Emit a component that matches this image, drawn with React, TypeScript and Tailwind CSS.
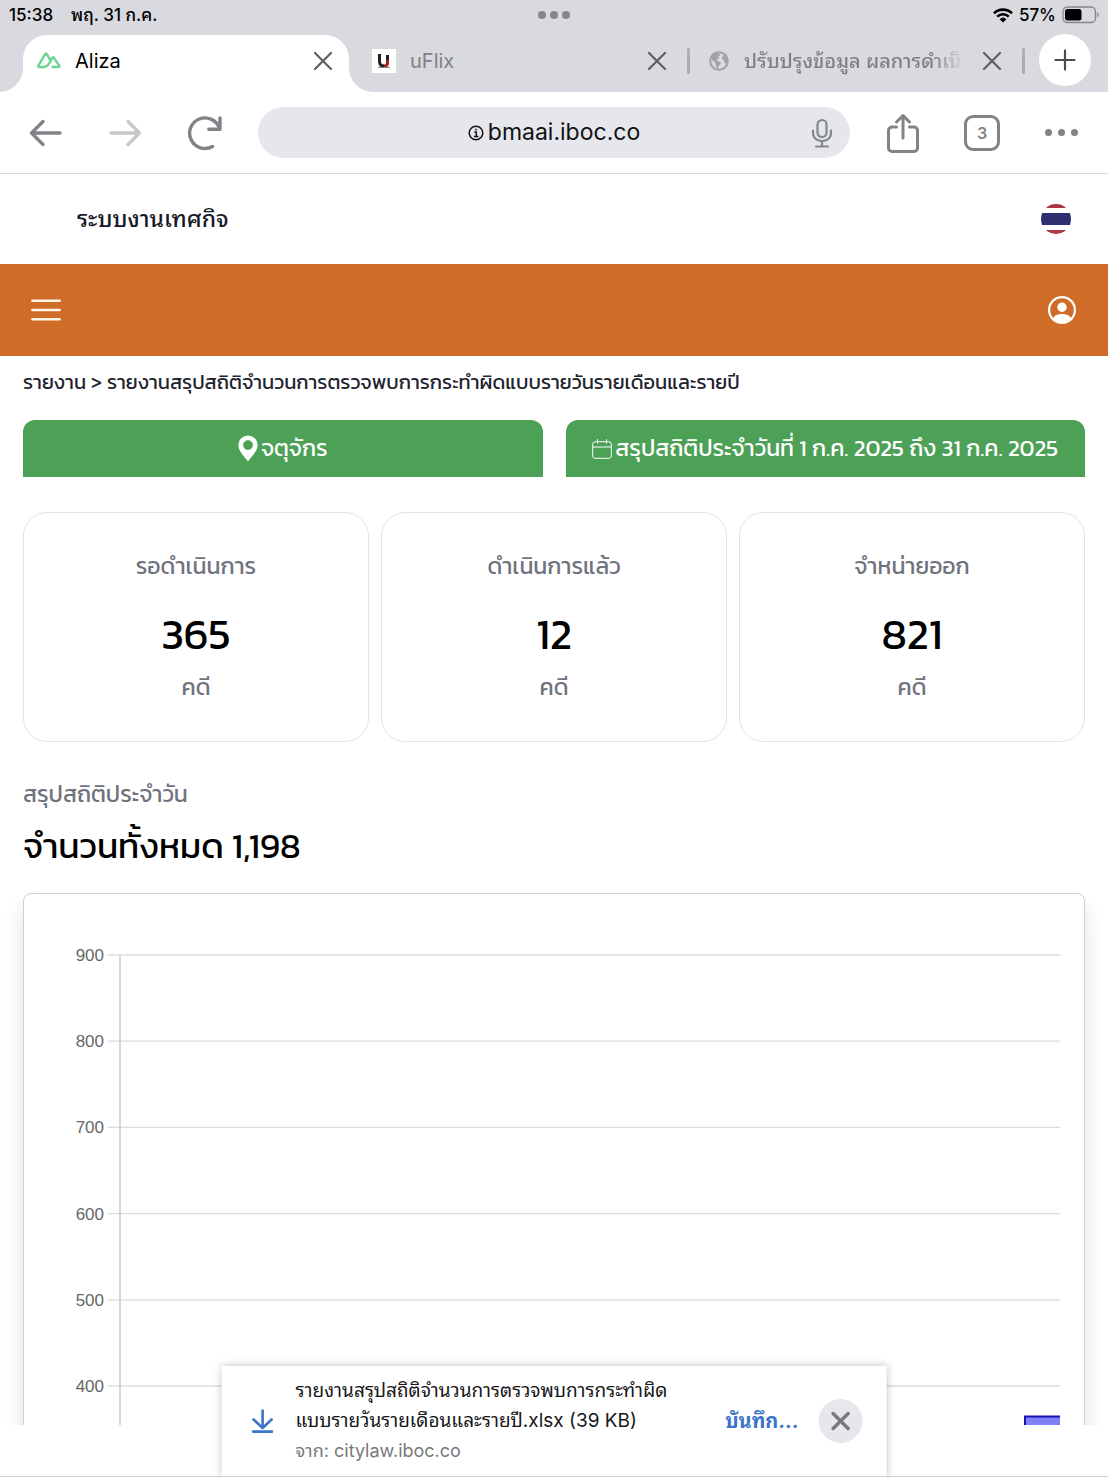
import React from "react";

const UI = "font-[Inter,Thonburi,'Noto_Sans_Thai_Looped',Loma,Garuda,'Noto_Sans',sans-serif]";

function CloseIcon({ className }: { className: string }) {
  return (
    <svg viewBox="0 0 20 20" className={className} fill="none" stroke="currentColor" strokeWidth="2.200" strokeLinecap="round">
      <path d="M2 2 18 18M18 2 2 18" />
    </svg>
  );
}

function StatusBar() {
  return (
    <div className="grid h-7 grid-cols-3 items-center pt-[2px] pr-2 pl-[9px] text-[17px] leading-6 font-medium text-black">
      <div className="flex gap-[18px] whitespace-nowrap">
        <span>15:38</span>
        <span>พฤ. 31 ก.ค.</span>
      </div>
      <div className="flex justify-center gap-1">
        <i className="size-2 rounded-full bg-[#85868a]" />
        <i className="size-2 rounded-full bg-[#85868a]" />
        <i className="size-2 rounded-full bg-[#85868a]" />
      </div>
      <div className="flex items-center justify-end gap-[6px]">
        <svg viewBox="0 0 20 15" className="h-[15px] w-5" aria-label="Wi-Fi">
          <g fill="none" stroke="#000" strokeWidth="2.6">
            <path d="M1 5.2a13 13 0 0 1 18 0" />
            <path d="M4.2 8.6a8.4 8.4 0 0 1 11.6 0" />
          </g>
          <path d="M6.6 11.2a5 5 0 0 1 6.8 0L10 14.6Z" />
        </svg>
        <span>57%</span>
        <svg viewBox="0 0 38 18" className="h-[18px] w-[38px]" aria-label="Battery">
          <rect x="1" y="1" width="32.500" height="15.500" rx="4.500" fill="none" stroke="#85868a" strokeWidth="1.300" />
          <rect x="3" y="3" width="16.500" height="11.500" rx="2.500" />
          <path d="M35.200 6.200c2 .8 2 4.400 0 5.200Z" fill="#85868a" />
        </svg>
      </div>
    </div>
  );
}

function Divider() {
  return <i className="h-[26px] w-[3px] shrink-0 rounded bg-[#adaeb2]" />;
}

function Tabs() {
  return (
    <div className="flex h-16 items-end pr-[17px] pl-[23px] text-xl">
      <div className="grid min-w-0 flex-1 grid-cols-[minmax(0,326fr)_minmax(0,341fr)_minmax(0,335fr)]">
        <div className="relative flex h-[57px] items-center rounded-t-3xl bg-white pr-4 pb-[6px] pl-[14px] text-black">
          <svg viewBox="0 0 24 24" className="absolute -left-[24px] bottom-0 size-6 text-white" aria-hidden="true">
            <path d="M24 0v24H0A24 24 0 0 0 24 0Z" fill="currentColor" />
          </svg>
          <svg viewBox="0 0 24 24" className="absolute -right-[24px] bottom-0 size-6 text-white" aria-hidden="true">
            <path d="M0 0v24h24A24 24 0 0 1 0 0Z" fill="currentColor" />
          </svg>
          <svg viewBox="0 0 24 17" className="h-[17px] w-6 shrink-0" fill="none" stroke="#6fd394" strokeWidth="2.400" strokeLinejoin="round" strokeLinecap="round">
            <path d="M6.800 15H1.800c-.7 0-.9-.6-.6-1.200L8.300 1.900c.4-.7 1-.7 1.400 0l2.600 4.400" />
            <path d="M6.800 15c3.300 0 4.400-1.900 5.500-3.800l3.200-5.500c.4-.7.900-.7 1.300 0l5.500 8.200c.4.7.1 1.100-.5 1.100h-6" />
            <path d="m12.300 6.300 1.300 2.300" />
          </svg>
          <span className="ml-[14px] flex-1 truncate">Aliza</span>
          <button aria-label="Close Aliza" className="text-[#5c5e62]"><CloseIcon className="size-5" /></button>
        </div>
        <div className="flex h-[57px] items-center pb-[6px] pl-[23px] text-[#808185]">
          <span className="flex size-6 shrink-0 items-center justify-center bg-white">
            <svg viewBox="0 0 14 14" className="size-[14px]" aria-hidden="true">
              <path d="M2.500 0v7.500c0 3 1.500 4.500 4.500 4.500" fill="none" stroke="#222" strokeWidth="3" />
              <path d="M10.500 1v8c0 2-1 3-3.500 3" fill="none" stroke="#a3221d" strokeWidth="3" />
              <path d="M9 1h3v5H9Z" fill="#222" />
              <path d="M1 13.500h12" stroke="#888" />
            </svg>
          </span>
          <span className="ml-[14px] flex-1 truncate">uFlix</span>
          <button aria-label="Close uFlix" className="mr-5 text-[#5c5e62]"><CloseIcon className="size-5" /></button>
          <Divider />
        </div>
        <div className="flex h-[57px] items-center pb-[6px] pl-[19px] text-[#808185]">
          <svg viewBox="0 0 20 20" className="size-5 shrink-0" aria-hidden="true">
            <circle cx="10" cy="10" r="8.800" fill="none" stroke="#a0a2a8" strokeWidth="2" />
            <path d="M3 4.500 8 2l3.500 1.500L9 6l1 1.500L7 9l3 1.500 2 2L9.500 15l-.5 3-2-3-.5-3.500L3 9Z" fill="#a0a2a8" />
            <path d="m14 3 4 5-.5 5-2-1-.5-3-2.500-1.500L14 5Z" fill="#a0a2a8" />
          </svg>
          <span className="ml-[15px] flex-1 leading-9 font-medium whitespace-nowrap [mask-image:linear-gradient(to_right,black_86%,transparent)]">
            ปรับปรุงข้อมูล ผลการดำเนิ
          </span>
          <button aria-label="Close tab" className="mr-5 ml-[18px] text-[#5c5e62]"><CloseIcon className="size-5" /></button>
          <Divider />
        </div>
      </div>
      <button aria-label="New tab" className="mb-[6px] ml-[14px] flex size-[52px] shrink-0 items-center justify-center rounded-full bg-white text-[#4a4b4f]">
        <svg viewBox="0 0 22 22" className="size-[22px]" stroke="currentColor" strokeWidth="2.200" strokeLinecap="round">
          <path d="M11 1.500v19M1.500 11h19" />
        </svg>
      </button>
    </div>
  );
}

function Toolbar() {
  return (
    <div className="flex h-[82px] items-center border-b border-[#d6d7da] bg-white pr-[30px] pl-7 text-[#808387]">
      <button aria-label="Back">
        <svg viewBox="0 0 34 28" className="h-7 w-[34px]" fill="none" stroke="currentColor" strokeWidth="3.400" strokeLinecap="round" strokeLinejoin="round">
          <path d="M32 14H3.500M15 2.500 3.500 14 15 25.500" />
        </svg>
      </button>
      <button aria-label="Forward" disabled className="ml-[46px] text-[#c6c7c9]">
        <svg viewBox="0 0 34 28" className="h-7 w-[34px]" fill="none" stroke="currentColor" strokeWidth="3.400" strokeLinecap="round" strokeLinejoin="round">
          <path d="M3 14h28.500M20 2.500 31.500 14 20 25.500" />
        </svg>
      </button>
      <button aria-label="Reload" className="ml-[45px]">
        <svg viewBox="0 0 36 36" className="size-9" fill="none" stroke="currentColor" strokeWidth="3.400" strokeLinecap="round" strokeLinejoin="round">
          <path d="M25.500 31.500A15.300 15.300 0 1 1 32.500 13.500M33 3v11.300H21.800" />
        </svg>
      </button>
      <div className="ml-[35px] flex h-[51px] min-w-0 flex-1 items-center rounded-full bg-[#e6e7ec] px-[17px]">
        <span className="w-[22px]" />
        <button className="flex flex-1 items-center justify-center gap-1 text-[23px] text-[#111214]">
          <svg viewBox="0 0 16 16" className="size-4" fill="none" stroke="currentColor" strokeWidth="1.500">
            <circle cx="8" cy="8" r="6.800" />
            <path d="M6.300 7h2v4.500M6 11.500h4.500M7.200 4.600h1.600" />
          </svg>
          <span>bmaai.iboc.co</span>
        </button>
        <button aria-label="Voice search" className="text-[#85888c]">
          <svg viewBox="0 0 22 30" className="h-[30px] w-[22px]" fill="none" stroke="currentColor" strokeWidth="2.200" strokeLinecap="round">
            <rect x="6.500" y="2" width="9" height="17" rx="4.500" />
            <path d="M2 12.500v2.500c0 5 4 8 9 8s9-3 9-8v-2.500M11 23v5M5 28.500h12" />
          </svg>
        </button>
      </div>
      <button aria-label="Share" className="ml-9">
        <svg viewBox="0 0 34 40" className="h-10 w-[34px]" fill="none" stroke="currentColor" strokeWidth="3" strokeLinecap="round" strokeLinejoin="round">
          <path d="M10.500 14H6a3.500 3.500 0 0 0-3.500 3.500V35A3.500 3.500 0 0 0 6 38.500h22a3.500 3.500 0 0 0 3.500-3.500V17.500A3.500 3.500 0 0 0 28 14h-4.500M17 25V2.500M10.500 9 17 2.500 23.500 9" />
        </svg>
      </button>
      <button aria-label="3 open tabs" className="ml-11 flex size-[36px] items-center justify-center rounded-[9px] border-3 border-current text-base font-semibold">
        3
      </button>
      <button aria-label="Menu" className="ml-[45px] flex gap-[6px]">
        <i className="size-[7px] rounded-full bg-current" />
        <i className="size-[7px] rounded-full bg-current" />
        <i className="size-[7px] rounded-full bg-current" />
      </button>
    </div>
  );
}

function SiteHeader() {
  return (
    <header>
      <div className="flex h-[90px] items-center justify-between pr-[37px] pl-[77px]">
        <h1 className="pb-[5px] font-[Thonburi,'Noto_Sans_Thai_Looped',Loma,Garuda,sans-serif] text-[23px] leading-9 font-medium text-[#151a28]">ระบบงานเทศกิจ</h1>
        <button aria-label="ภาษาไทย" className="flex size-[30px] flex-col overflow-hidden rounded-full bg-white">
          <i className="h-1 w-full bg-[#a93a40]" />
          <i className="mt-[5px] h-3 w-full bg-[#2d2f70]" />
          <i className="mt-[5px] h-1 w-full bg-[#a93a40]" />
        </button>
      </div>
      <nav className="flex h-[92px] items-center justify-between bg-[#d16b28] pr-8 pl-[31px] text-white">
        <button aria-label="เมนู">
          <svg viewBox="0 0 30 24" className="h-6 w-[30px]" stroke="#fff5e6" strokeWidth="2.400" strokeLinecap="round">
            <path d="M1.300 2.800h27.400M1.300 12h27.400M1.300 21.200h27.400" />
          </svg>
        </button>
        <button aria-label="บัญชีผู้ใช้">
          <svg viewBox="0 0 28 28" className="size-7">
            <circle cx="14" cy="14" r="12.900" fill="none" stroke="currentColor" strokeWidth="2.200" />
            <circle cx="14" cy="11.200" r="4.700" fill="currentColor" />
            <path d="M5 22.500c1.500-3.400 5-4.500 9-4.500s7.500 1.100 9 4.500c-2 2.600-5 4.500-9 4.500s-7-1.900-9-4.500Z" fill="currentColor" />
          </svg>
        </button>
      </nav>
    </header>
  );
}

const stats = [
  { label: "รอดำเนินการ", value: "365" },
  { label: "ดำเนินการแล้ว", value: "12" },
  { label: "จำหน่ายออก", value: "821" },
];

const ticks = [900, 800, 700, 600, 500, 400];

function Chart() {
  return (
    <svg viewBox="0 0 1060 620" className="w-full font-[Liberation_Sans,Arial,sans-serif]" role="img" aria-label="สรุปสถิติประจำวัน">
      {ticks.map((t, i) => (
        <g key={t}>
          <path d={`M84 ${61 + i * 86.2}H1036`} stroke="#dcdcdc" strokeWidth="1.300" />
          <text x="80" y={67 + i * 86.2} textAnchor="end" fontSize="17" fill="#666">{t}</text>
        </g>
      ))}
      <path d="M96 61V620" stroke="#c8c8c8" strokeWidth="1.500" />
      <path d="M1000 522h36v98h-36Z" fill="#8080f5" />
      <path d="M1001 620V522.500h35" fill="none" stroke="#1414b4" strokeWidth="2" />
    </svg>
  );
}

function Report() {
  return (
    <main className="min-h-0 flex-1 overflow-hidden px-[23px]">
      <nav aria-label="breadcrumb" className="mt-2 flex h-9 items-center gap-[5px] text-xl whitespace-nowrap text-[#1f2430]">
        <a href="#reports">รายงาน</a>
        <span>&gt;</span>
        <span>รายงานสรุปสถิติจำนวนการตรวจพบการกระทำผิดแบบรายวันรายเดือนและรายปี</span>
      </nav>
      <div className="mt-5 grid grid-cols-2 gap-[23px] text-[23px] whitespace-nowrap text-white">
        <button className="flex h-[57px] items-center justify-center gap-[3px] rounded-t-xl bg-[#4da156]">
          <svg viewBox="0 0 20 27" className="h-[27px] w-5" fill="currentColor">
            <path fillRule="evenodd" d="M10 .5A9.700 9.700 0 0 1 19.700 10.200C19.700 16 13 22 10 26.500 7 22 .3 16 .3 10.200A9.700 9.700 0 0 1 10 .5Zm0 4.700a4.900 4.900 0 1 0 0 9.800 4.900 4.900 0 0 0 0-9.800Z" />
          </svg>
          <span>จตุจักร</span>
        </button>
        <button className="flex h-[57px] items-center justify-center gap-[3px] rounded-t-xl bg-[#4da156]">
          <svg viewBox="0 0 20 20" className="size-5" fill="none" stroke="currentColor" strokeWidth="1">
            <rect x=".7" y="2.700" width="18.600" height="16.600" rx="2.500" />
            <path d="M.7 8h18.600M5.500.3v4.200M14.500.3v4.200" />
          </svg>
          <span>สรุปสถิติประจำวันที่ 1 ก.ค. 2025 ถึง 31 ก.ค. 2025</span>
        </button>
      </div>
      <div className="mt-[35px] grid grid-cols-3 gap-3 text-center">
        {stats.map((s) => (
          <section key={s.label} className="flex h-[230px] flex-col items-center rounded-3xl border border-[#e4e4e7] pt-[35px] text-[23px] leading-9 text-[#6f737d]">
            <h2>{s.label}</h2>
            <p className="mt-6 text-[43px] leading-[52px] text-black">{s.value}</p>
            <p className="mt-[9px]">คดี</p>
          </section>
        ))}
      </div>
      <p className="mt-[34px] text-[23px] leading-9 text-[#6f737d]">สรุปสถิติประจำวัน</p>
      <h2 className="mt-[9px] text-[35px] leading-[50px] text-black">จำนวนทั้งหมด 1,198</h2>
      <div className="mt-[22px] rounded-lg border border-[#cfcfcf] shadow-[0_14px_20px_rgba(0,0,0,0.12)]">
        <Chart />
      </div>
    </main>
  );
}

function DownloadBar() {
  return (
    <aside className="absolute bottom-0 left-1/2 flex h-[111px] w-3/5 -translate-x-1/2 items-center border-b border-[#cfd0d3] bg-white pr-6 pl-[30px] shadow-[0_0_8px_rgba(0,0,0,0.25)]">
      <svg viewBox="0 0 22 24" className="h-6 w-[22px] shrink-0" fill="none" stroke="#3b74c9" strokeWidth="2.600" strokeLinecap="round" strokeLinejoin="round">
        <path d="M11 1.500v17M2 10.500l9 8.500 9-8.500M1.500 22.600h19" />
      </svg>
      <div className="ml-[22px] text-[19px] leading-[30px] whitespace-nowrap text-[#17181a]">
        <p>รายงานสรุปสถิติจำนวนการตรวจพบการกระทำผิด</p>
        <p>แบบรายวันรายเดือนและรายปี.xlsx (39 KB)</p>
        <p className="text-lg leading-[30px] text-[#77797d]">จาก: citylaw.iboc.co</p>
      </div>
      <button className="ml-auto text-xl leading-9 font-bold text-[#3b74c9]">บันทึก...</button>
      <button aria-label="ปิด" className="ml-5 flex size-11 items-center justify-center rounded-full bg-[#e6e7ec] text-[#77797d]">
        <svg viewBox="0 0 20 20" className="size-5" stroke="currentColor" strokeWidth="3.500" strokeLinecap="round">
          <path d="M2.500 2.500l15 15M17.500 2.500l-15 15" />
        </svg>
      </button>
    </aside>
  );
}

export default function App() {
  return (
    <div className={`relative flex h-screen flex-col overflow-hidden bg-white ${UI}`}>
      <div className="shrink-0 bg-[#d9dae0]">
        <StatusBar />
        <Tabs />
        <Toolbar />
      </div>
      <div className="flex min-h-0 flex-1 flex-col font-[Kanit,'Noto_Sans_Thai','Open_Sans',sans-serif]">
        <SiteHeader />
        <Report />
      </div>
      <footer className="h-[52px] shrink-0 border-b border-[#cfd0d3] bg-white" />
      <DownloadBar />
    </div>
  );
}
